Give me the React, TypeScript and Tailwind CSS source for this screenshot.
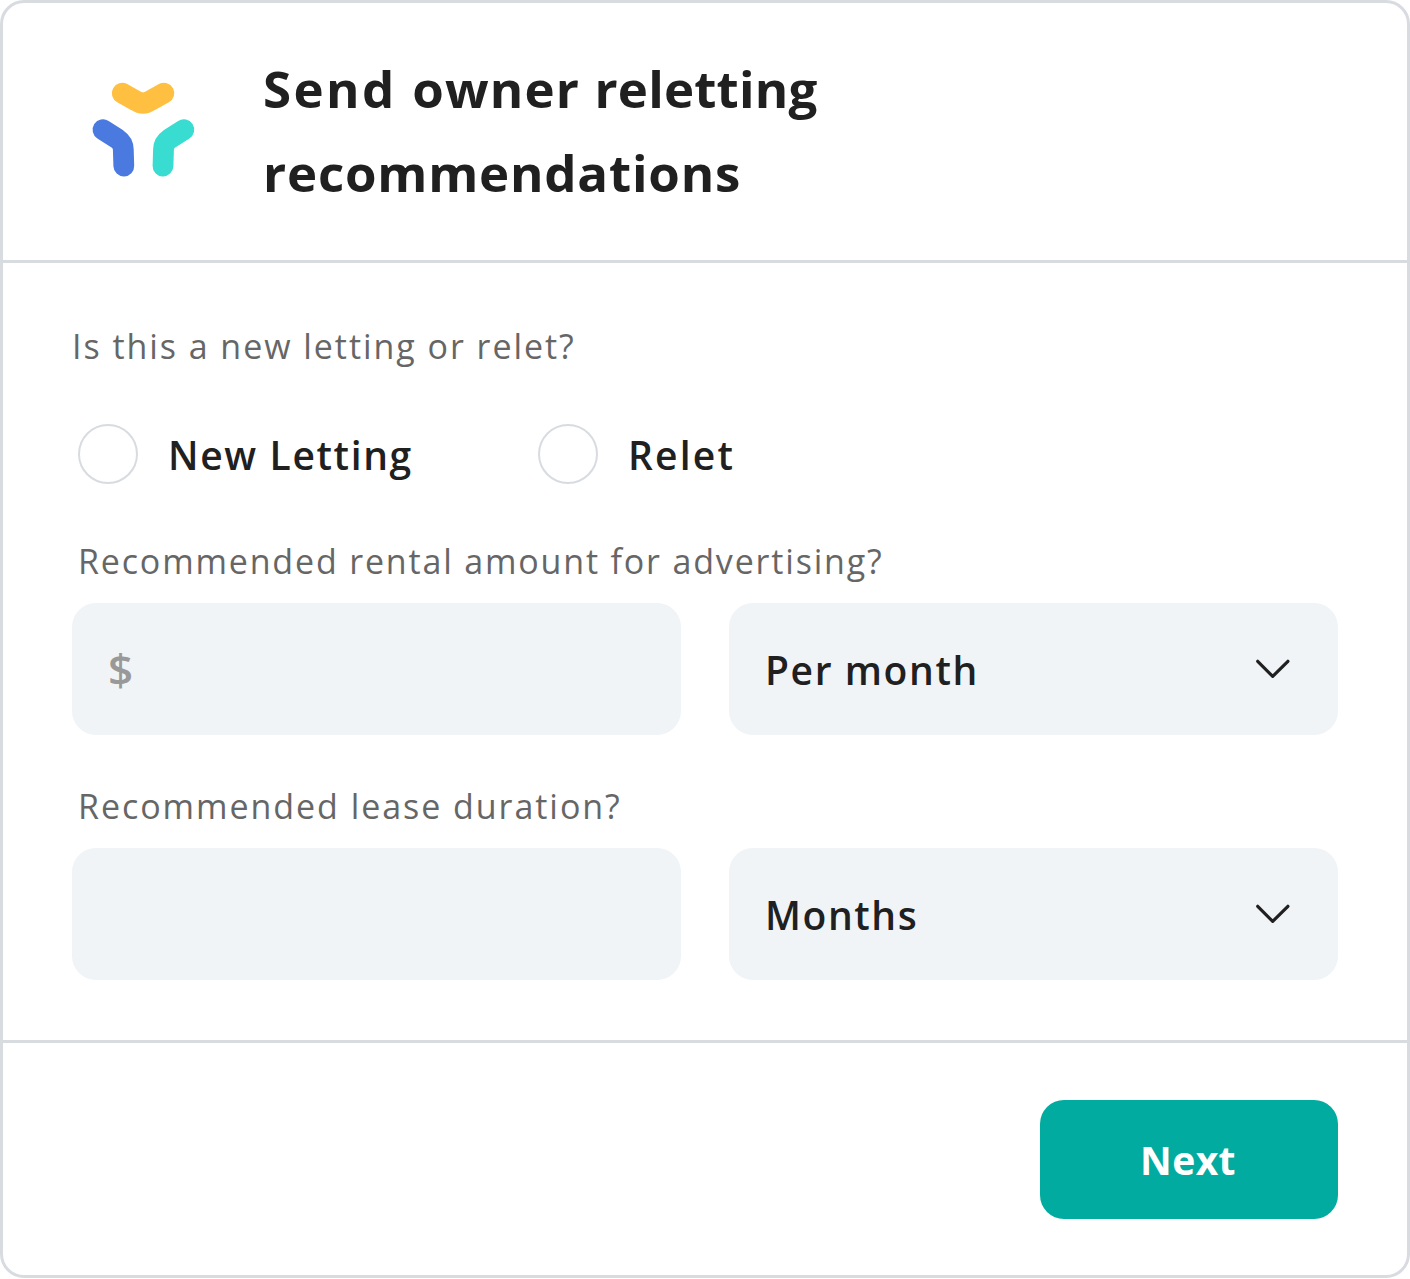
import type { ReactNode } from "react";

function Logo() {
  return (
    <svg width="102" height="96" viewBox="92 81 102 96" fill="none" strokeWidth="20.8" strokeLinecap="round" className="shrink-0 overflow-visible">
      <path d="M122.2 93.2L136 100.8Q143 105.4 150 100.8L163.9 93.2" stroke="#ffbf40" />
      <path d="M103 129.7L117.5 139Q123.1 142.8 123.3 149.5L123.8 166" stroke="#4a7ae0" />
      <path d="M183.8 129.7L169.3 139Q163.7 142.8 163.5 149.5L163 166" stroke="#38dcd0" />
    </svg>
  );
}

function Chevron() {
  return (
    <svg width="34" height="20" viewBox="0 0 34 20" fill="none" stroke="#202020" strokeWidth="3.2" strokeLinecap="round" strokeLinejoin="round">
      <path d="M1.7 2.3L16.7 17.4L31.9 2.3" />
    </svg>
  );
}

function Radio({ children }: { children: ReactNode }) {
  return (
    <label className="flex h-[60px] w-[460px] items-center">
      <span className="size-[60px] shrink-0 rounded-full border-2 border-[#d8dce0]" />
      <span className="mt-0.5 ml-[30px] text-[39px] font-semibold leading-[60px] whitespace-nowrap">{children}</span>
    </label>
  );
}

function Select({ children }: { children: ReactNode }) {
  return (
    <button type="button" className="flex h-[132px] w-[609px] items-center justify-between rounded-[24px] bg-[#f0f4f7] pr-12 pl-9 text-[39px] font-semibold">
      <span className="mt-[3px] whitespace-nowrap">{children}</span>
      <Chevron />
    </button>
  );
}

export default function App() {
  return (
    <main className="flex h-[1278px] w-[1410px] flex-col rounded-[24px] border-[3px] border-[#d8dce0] bg-white font-['Open_Sans',sans-serif] text-[#202020]">
      <header className="flex h-[260px] items-start border-b-[3px] border-[#d8dce0] pt-[43px] pl-[89px]">
        <div className="mt-[35px]"><Logo /></div>
        <h1 className="ml-[69px] text-[51px] leading-[84px] font-bold whitespace-nowrap">
          <span className="block tracking-[1.15px]">
            <span className="tracking-[2.4px]">Send </span>owner <span className="tracking-[0.2px]">reletting</span>
          </span>
          <span className="block tracking-[0.8px]">recommendations</span>
        </h1>
      </header>
      <section className="flex h-[780px] flex-col border-b-[3px] border-[#d8dce0] px-[69px]">
        <p className="mt-[61px] text-[34px] leading-[44px] tracking-[1.95px] whitespace-nowrap text-[#666]">Is this a new letting or relet?</p>
        <div className="mt-14 flex pl-[6px]">
          <Radio><span className="tracking-[1.65px]">New Letting</span></Radio>
          <Radio><span className="tracking-[2.2px]">Relet</span></Radio>
        </div>
        <p className="mt-[55px] pl-[6px] text-[34px] leading-[44px] tracking-[1.83px] whitespace-nowrap text-[#666]">Recommended rental amount for advertising?</p>
        <div className="mt-5 flex gap-12">
          <div className="flex h-[132px] w-[609px] items-center rounded-[24px] bg-[#f0f4f7] pl-9 text-[44px] font-semibold text-[#999]">$</div>
          <Select><span className="tracking-[1.6px]">Per month</span></Select>
        </div>
        <p className="mt-[49px] pl-[6px] text-[34px] leading-[44px] tracking-[1.95px] whitespace-nowrap text-[#666]">Recommended lease duration?</p>
        <div className="mt-5 flex gap-12">
          <div className="h-[132px] w-[609px] rounded-[24px] bg-[#f0f4f7]" />
          <Select><span className="tracking-[1.6px]">Months</span></Select>
        </div>
      </section>
      <footer className="flex justify-end pt-[57px] pr-[69px]">
        <button type="button" className="h-[119px] w-[298px] rounded-[24px] bg-[#02aba0] pt-0.5 pr-2 pl-1.5 text-[39px] font-bold tracking-[0.4px] text-white">Next</button>
      </footer>
    </main>
  );
}
